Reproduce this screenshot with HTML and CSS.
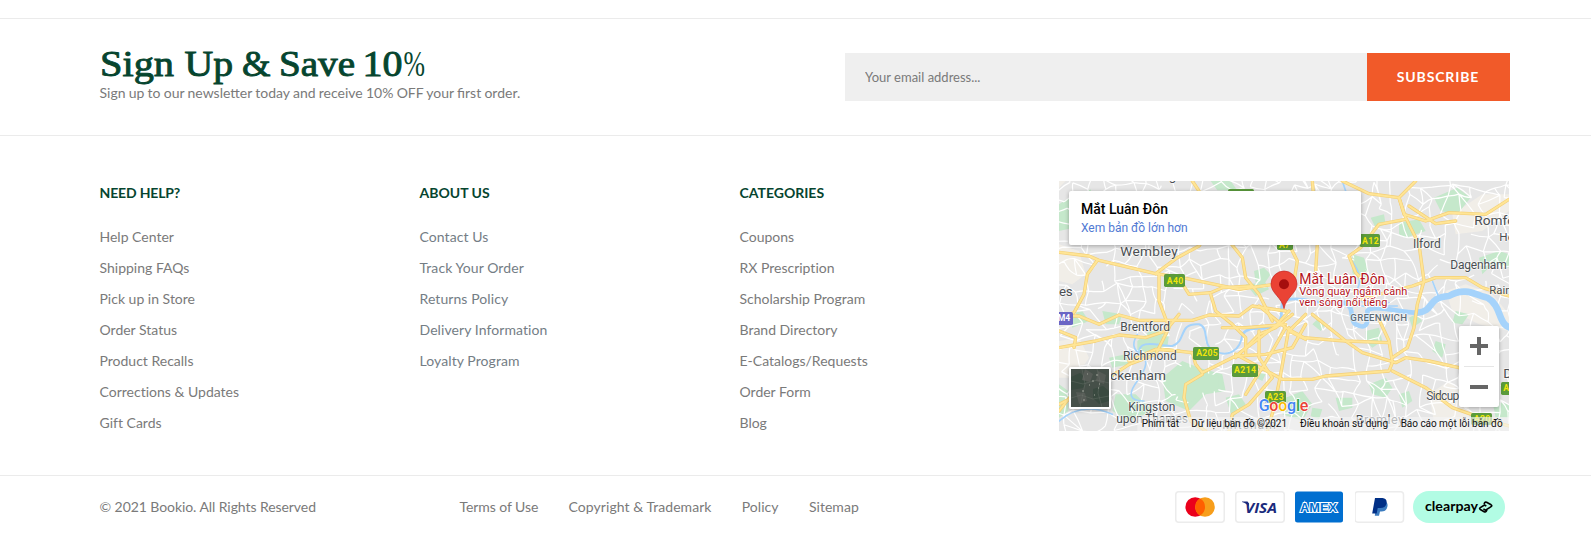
FILE: index.html
```html
<!DOCTYPE html>
<html lang="en">
<head>
<meta charset="utf-8">
<title>Bookio</title>
<link rel="stylesheet" href="styles.css">
</head>
<body>
<footer class="footer">
  <section class="newsletter">
    <div class="newsletter-copy">
      <h2 class="newsletter-title">
        <svg class="title-art" width="330" height="44" viewBox="0 0 330 44">
          <text x="0" y="31" textLength="74" lengthAdjust="spacingAndGlyphs">Sign</text>
          <text x="84.500" y="31" textLength="48.500" lengthAdjust="spacingAndGlyphs">Up</text>
          <text x="142" y="31" textLength="28.500" lengthAdjust="spacingAndGlyphs">&amp;</text>
          <text x="179" y="31" textLength="76" lengthAdjust="spacingAndGlyphs">Save</text>
          <text x="262.500" y="31" textLength="40" lengthAdjust="spacingAndGlyphs">10</text>
          <text class="title-thin" x="303.500" y="31" textLength="21.500" lengthAdjust="spacingAndGlyphs">%</text>
        </svg>
      </h2>
      <p class="newsletter-text">Sign up to our newsletter today and receive 10% OFF your first order.</p>
    </div>
    <form class="subscribe">
      <input class="subscribe-input" type="email" placeholder="Your email address...">
      <button class="subscribe-button" type="button">SUBSCRIBE</button>
    </form>
  </section>

  <section class="columns">
    <div class="column">
      <h3 class="column-title title-tight">NEED HELP?</h3>
      <ul class="links">
        <li>Help Center</li><li>Shipping FAQs</li><li>Pick up in Store</li><li>Order Status</li><li>Product Recalls</li><li>Corrections &amp; Updates</li><li>Gift Cards</li>
      </ul>
    </div>
    <div class="column">
      <h3 class="column-title">ABOUT US</h3>
      <ul class="links links-cool">
        <li>Contact Us</li><li>Track Your Order</li><li>Returns Policy</li><li>Delivery Information</li><li>Loyalty Program</li>
      </ul>
    </div>
    <div class="column">
      <h3 class="column-title">CATEGORIES</h3>
      <ul class="links">
        <li>Coupons</li><li>RX Prescription</li><li>Scholarship Program</li><li>Brand Directory</li><li>E-Catalogs/Requests</li><li>Order Form</li><li>Blog</li>
      </ul>
    </div>
    <div class="map">
      <svg class="map-canvas" viewBox="0 0 1350 750" width="450" height="250">
        <rect width="1350" height="750" fill="#e6e6e6"/>
        <g fill="#f1eee8">
          <path d="M0 190L60 210 80 280 40 310 0 300zM0 20L20 0H0zM1180 100l90-60 80 0v50l-80 60-80 10zM1160 330l60-20 80 30 50 60v50l-90-20-80-40zM0 480l60-10 30 60-40 60-50 0zM1110 640l60-40 60 60 0 90h-100z"/>
        </g>
        <g fill="#c5e8cb">
          <path d="M0 70l30-20 25 30-10 60-45 10zM60 45l35-20 10 40-30 15zM235 480l50-40 45 20-5 40-50 20-40-5zM310 590l60-50 50 20 70 20 10 50-60 10-50 50-70-30zM170 640l60 0 50 50-70 30-50-30zM585 270l30-10 20 20-20 30-25-5zM560 310l60-5 10 20-40 20zM880 220l35 10 20 60-25 25-30-40zM935 110l40-10 5 30-30 10zM1020 125l60-10 20 35-60 20-20-10zM1125 50l70-30 40 30-40 50-50-10zM1260 230l60-20 30 10v40l-50-10-30 30zM760 430l20-20 20 20-15 20zM920 450l40-10 10 40-30 20-20-20zM1050 410l20-10 20 20-30 20zM680 650l50-20 30 40-30 50-60-20zM930 610l50-20 20 30-20 30-40-10zM1020 640l30-10 10 30-30 20zM500 650l40-10 20 30-40 40zM30 400l40-10 20 30-50 20zM130 390l60 10-10 30-40 0zM150 530l50-10 10 30-50 10zM830 650l50 0 0 30-40 10zM1130 480l30 10-10 40-30-20zM0 610l28 20 0 60-28 20zM455 0l60 0 20 28-60 0zM1300 660l50 10v40l-40 0zM760 680l30 5-10 30-25-10zM1190 390l40 10-20 30-30-5zM600 570l20 10-10 20-20-10z"/>
        </g>
        <g id="streets" class="streets"></g>
        <g fill="#c5e8cb">
          <path d="M318 595l55-45 45 20 60 15 0 45-50 5-35 30-40-20zM240 485l45-35 30 15-5 30-35 15zM885 228l25 10 18 50-18 20-22-35z"/>
        </g>
        <g fill="none" stroke="#a5d3fb" stroke-linecap="round" stroke-linejoin="round">
          <path stroke-width="6" d="M240 520C235 470 300 495 340 495C385 480 355 425 420 430C455 440 425 500 470 510C505 530 545 510 550 460"/>
          <path stroke-width="8" d="M550 460C575 425 625 460 660 425C680 390 650 365 690 355C750 345 790 380 855 365"/>
          <path stroke-width="14" d="M855 365C890 375 870 420 890 430C925 450 930 420 925 390C940 365 1035 400 1085 395"/>
          <path stroke-width="20" d="M1075 395C1130 390 1100 350 1170 345C1220 315 1255 345 1285 350C1330 375 1315 430 1355 440"/>
          <path stroke-width="5" d="M870 360l120 5M885 375h130M235 460q-25 40 10 60t-10 80 20 60M875 235q40 50 20 90M0 720q70-60 160-20M850 0l10 30M1120 300l20 50"/>
        </g>
        <g class="roads" id="roads">
          <path d="M0 214L90 225L120 238L290 278L370 290L540 325L680 305"/>
          <path d="M115 238L85 280L75 340L45 395L0 410"/>
          <path d="M290 278L355 230L420 195L470 120"/>
          <path d="M300 278L300 360L330 440L290 520L210 550L150 590L40 640L0 690"/>
          <path d="M0 405L60 405L120 430L180 402L240 418L400 418L450 402L540 405L580 375L680 390"/>
          <path d="M0 500L110 480L180 462L260 470L320 450L360 400"/>
          <path d="M0 450L50 470L45 500"/>
          <path d="M365 300L390 340L455 335L490 320L580 315"/>
          <path d="M455 340L470 390L520 430L560 470L560 520"/>
          <path d="M510 180L550 230L560 290L600 340L640 420"/>
          <path d="M400 0L420 30M850 0L930 38L1020 50L1070 0"/>
          <path d="M690 190L715 240L705 300M775 190L770 270M760 0L765 60"/>
          <path d="M1020 50L1035 100L1100 120L1170 95L1280 100L1350 55"/>
          <path d="M905 200L960 130L1040 115M905 200L870 225L890 275L915 300"/>
          <path d="M1020 50L1040 110L1080 190L1095 300L1075 370L1065 440L1045 500L1000 530"/>
          <path d="M1050 75L1130 128L1190 120"/>
          <path d="M870 365L940 345L1060 315L1130 290L1220 290L1270 320L1350 345"/>
          <path d="M680 430L560 440L490 440"/>
          <path d="M310 505L400 515L410 550L430 575"/>
          <path d="M210 540L290 505L360 510M430 575L530 525L650 435L690 390"/>
          <path d="M600 375L680 440L735 470L830 478L860 480L990 485"/>
          <path d="M760 400L860 480L910 515L1010 545L1040 530L1110 540L1200 560L1210 565"/>
          <path d="M960 415L990 480L1000 545L990 570L800 585L760 595L670 595L530 520"/>
          <path d="M1000 570L1100 620L1180 680L1280 715L1350 735"/>
          <path d="M530 525L620 520L700 500L740 430M690 440L665 580L645 680L625 750"/>
          <path d="M600 450L600 530L640 590L570 670L520 700L510 750"/>
          <path d="M430 580L380 610L375 650L395 720L440 750"/>
          <path d="M680 440L640 510L610 560L560 640M700 400L650 440L600 460L530 530"/>
          <path d="M0 670L30 655M740 400L690 450L740 475"/>
        </g>
        <g class="badges">
          <g fill="#5b9b3c"><rect x="507" y="24" width="78" height="36" rx="5"/><rect x="315" y="279" width="63" height="39" rx="5"/><rect x="654" y="170" width="48" height="37" rx="5"/><rect x="902" y="159" width="61" height="39" rx="5"/><rect x="402" y="498" width="78" height="39" rx="5"/><rect x="519" y="549" width="78" height="39" rx="5"/><rect x="618" y="630" width="63" height="36" rx="5"/><rect x="1326" y="603" width="50" height="39" rx="5"/><rect x="1236" y="696" width="63" height="36" rx="5"/></g>
          <rect x="-20" y="393" width="62" height="39" rx="5" fill="#6a66c5"/>
          <g fill="#f0e60a"><text x="323" y="308" textLength="50">A40</text><text x="660" y="202">A7</text><text x="909" y="189" textLength="50">A12</text><text x="412" y="526" textLength="64">A205</text><text x="525" y="577" textLength="66">A214</text><text x="624" y="657" textLength="50">A23</text><text x="1333" y="631">A2</text><text x="1244" y="723" textLength="50">A20</text></g>
          <text x="-4" y="421" fill="#fff">M4</text>
        </g>
        <g class="places">
          <text x="329" y="-2">g</text>
          <text x="184" y="225" font-size="41" textLength="172">Wembley</text>
          <text x="0" y="345" font-size="40" textLength="41">es</text>
          <text x="184" y="450" font-size="36" textLength="149">Brentford</text>
          <text x="192" y="538" font-size="36" textLength="161">Richmond</text>
          <text x="153" y="597" font-size="41" textLength="168">ckenham</text>
          <text x="208" y="690" font-size="36" textLength="141">Kingston</text>
          <text x="172" y="726" font-size="36" textLength="215">upon Thames</text>
          <text x="490" y="745" font-size="36" textLength="160">Mitcham</text>
          <text x="890" y="729" font-size="38" textLength="145">Bromley</text>
          <text x="1062" y="201" font-size="36" textLength="83">Ilford</text>
          <text x="1246" y="132" font-size="41">Romford</text>
          <text x="1321" y="181" font-size="35">Hornchurch</text>
          <text x="1174" y="265" font-size="36" textLength="169">Dagenham</text>
          <text x="1291" y="339" font-size="34">Rainham</text>
          <text x="1333" y="592" font-size="41">Dartford</text>
          <text x="1102" y="657" font-size="36" textLength="99">Sidcup</text>
          <text x="874" y="420" font-size="29" font-weight="500" fill="#5d6b76" textLength="170">GREENWICH</text>
        </g>
        <g>
          <path d="M675 383C670 350 636 337 636 309A39 39 0 0 1 714 309C714 337 680 350 675 383Z" fill="#ea4335" stroke="#c5221f" stroke-width="2"/>
          <circle cx="675" cy="310" r="15" fill="#a50e0e"/>
        </g>
        <g class="pin-label">
          <text x="721" y="309" font-size="42" textLength="258">Mắt Luân Đôn</text>
          <text x="721" y="341" font-size="33" textLength="324">Vòng quay ngắm cảnh</text>
          <text x="721" y="374" font-size="33" textLength="264">ven sông nổi tiếng</text>
        </g>
        <g class="google"><text x="599" y="689" textLength="149"><tspan fill="#4285f4">G</tspan><tspan fill="#ea4335">o</tspan><tspan fill="#fbbc05">o</tspan><tspan fill="#4285f4">g</tspan><tspan fill="#34a853">l</tspan><tspan fill="#ea4335">e</tspan></text></g>
        <rect x="235" y="708" width="1115" height="42" fill="#f5f5f5" opacity=".65"/>
        <g class="legal">
          <text x="248" y="738" textLength="112">Phím tắt</text>
          <text x="397" y="738" textLength="287">Dữ liệu bản đồ ©2021</text>
          <text x="723" y="738" textLength="264">Điều khoản sử dụng</text>
          <text x="1025" y="738" textLength="306">Báo cáo một lỗi bản đồ</text>
        </g>
      </svg>
      <div class="map-card">
        <div class="map-card-title">Mắt Luân Đôn</div>
        <div class="map-card-link">Xem bản đồ lớn hơn</div>
      </div>
      <div class="satellite">
        <svg width="38" height="38" viewBox="0 0 38 38">
          <rect width="38" height="38" fill="#465049"/>
          <path d="M0 8l9-4 7 6-4 9-12 2zM22 20l10-3 6 5v10l-10 3-6-6z" fill="#3a4a40"/>
          <path d="M14 0l8 5-3 8-8-2zM27 2l8 4-2 9-8-3zM5 23l9 1 2 8-8 3z" fill="#565b56"/>
          <path d="M0 12l12 3 14-4 12 3M26 0l3 12-2 12 4 14M0 29l10-3 12 4 16-3M11 0l3 15-5 23" fill="none" stroke="#747a72" stroke-width=".7" opacity=".5"/>
          <path d="M16 5h1m4 7h2m4 7h1m-17 3h2m5-6h1m6-10h2m-4 20h1m-12 5h2m14-16h1" stroke="#a0a49a" stroke-width="1"/>
        </svg>
      </div>
      <div class="zoom">
        <svg class="zoom-icon" viewBox="0 0 18 18"><path d="M0 7h7V0h4v7h7v4h-7v7H7v-7H0z"/></svg>
        <span class="zoom-rule"></span>
        <svg class="zoom-icon" viewBox="0 0 18 18"><path d="M0 7h18v4H0z"/></svg>
      </div>
    </div>
  </section>

  <section class="bottom">
    <p class="copyright">© 2021 Bookio. All Rights Reserved</p>
    <nav class="legal-nav"><span class="nav-tight">Terms of Use</span><span>Copyright &amp; Trademark</span><span>Policy</span><span>Sitemap</span></nav>
    <div class="payments">
      <svg width="50" height="32" viewBox="0 0 50 32">
        <rect class="card" x=".75" y=".75" width="48.5" height="30.5" rx="3"/>
        <circle cx="20.2" cy="16" r="9.8" fill="#eb001b"/><circle cx="30" cy="16" r="9.8" fill="#f79e1b"/>
        <path d="M25.1 7.5a9.8 9.8 0 0 1 0 17a9.8 9.8 0 0 1 0-17z" fill="#ff5f00"/>
      </svg>
      <svg width="50" height="32" viewBox="0 0 50 32">
        <rect class="card" x=".75" y=".75" width="48.5" height="30.5" rx="3"/>
        <text class="visa" x="10" y="21.500" textLength="32" lengthAdjust="spacingAndGlyphs">VISA</text>
        <path d="M7 10.500h5.500l1.500 2-.5 3q-2-3.500-6.500-4.500z" fill="#1a2a7c"/>
      </svg>
      <svg width="50" height="32" viewBox="0 0 50 32">
        <rect x="0" y=".5" width="48" height="31" rx="2.500" fill="#016fd0"/>
        <text class="amex" x="5" y="20.500" textLength="37" lengthAdjust="spacingAndGlyphs">AMEX</text>
      </svg>
      <svg width="50" height="32" viewBox="0 0 50 32">
        <rect class="card" x="0" y=".75" width="48.500" height="30.500" rx="3"/>
        <path d="M21.500 10.500h8q4 1 2.800 5.500q-1 4.500-6 4.500h-1.300l-1 4.200h-4.200z" fill="#3b7bbf"/>
        <path d="M20 7h7.500q5 .5 4 5.500q-1 4.500-6.300 4.500h-2.500l-1 5.500h-4.500z" fill="#002f86"/>
      </svg>
      <svg class="clearpay" width="92" height="32" viewBox="0 0 92 32">
        <rect width="92" height="32" rx="16" fill="#b2fce4"/>
        <text class="clearpay-text" x="12" y="20" textLength="53" lengthAdjust="spacingAndGlyphs">clearpay</text>
        <path d="M71 13l.6-1.200q.8-1.200 2-.5l4.500 2.500q1.400.9 0 1.800l-5.500 3.600-2.200-1.300M74 18.800l-.8 1.500q-.8 1.100-2 .4l-3.900-2.200q-1.400-.9 0-1.800l4.200-2.700 1.800 1" fill="none" stroke="#000" stroke-width="1.600" stroke-linejoin="round"/>
      </svg>
    </div>
  </section>
</footer>
<script src="map.js"></script>
</body>
</html>
```
FILE: styles.css
```css
* { box-sizing: border-box; }
body { margin: 0; background: #fff; color: #7a7a7a; font-family: Lato, sans-serif; font-size: 14px; }
h2, h3, p, ul { margin: 0; padding: 0; }
.footer { height: 538px; padding-top: 18px; overflow: hidden; }
.newsletter { height: 117px; border-top: 1px solid #ebebeb; padding: 0 81px 0 99.5px; display: flex; justify-content: space-between; }
.newsletter-copy { padding-top: 26px; }
.newsletter-title { height: 38px; }
.title-art { display: block; fill: #06452f; stroke: #06452f; stroke-width: .9; font: 400 36px "Liberation Serif", serif; overflow: visible; }
.title-thin { stroke: none; }
.newsletter-text { line-height: 20px; white-space: nowrap; word-spacing: -.35px; }
.subscribe { display: flex; width: 665px; height: 48px; margin-top: 34px; }
.subscribe-input { flex: 1; border: 0; background: #efefef; padding: 0 20px; font: 13px Lato, sans-serif; border-radius: 0; }
.subscribe-input::placeholder { color: #7a7a7a; }
.subscribe-button { width: 143px; border: 0; background: #f15a29; color: #fff; font: 700 14px Lato, sans-serif; letter-spacing: .85px; padding: 0 1px 2px 0; }
.columns { height: 340px; border-top: 1px solid #ebebeb; padding: 45px 0 0 99.5px; display: grid; grid-template-columns: 320px 320px 319.5px 450px; align-items: start; }
.column-title { font-size: 14px; line-height: 24px; font-weight: 700; color: #06452f; }
.title-tight { letter-spacing: -.15px; }
.links { list-style: none; padding-top: 16px; font-variant-ligatures: none; }
.links li { height: 31px; line-height: 31px; }
.links-cool { color: #747d85; letter-spacing: .08px; }
.map { position: relative; width: 450px; height: 250px; overflow: hidden; font-family: Roboto, sans-serif; }
.map-canvas { display: block; }
.streets { fill: none; stroke: #fff; stroke-width: 3.6; stroke-linejoin: round; }
.roads { fill: none; stroke: #fbdb7c; stroke-width: 9; stroke-linejoin: round; stroke-linecap: round; }
.badges text { font-size: 26px; font-weight: 700; }
.places { fill: #4a4e52; stroke: #fff; stroke-width: 4; stroke-opacity: .7; paint-order: stroke; font-size: 40px; }
.pin-label { fill: #b3141c; stroke: #fff; stroke-width: 6; paint-order: stroke; }
.google { font-size: 48px; font-weight: 500; stroke: #fff; stroke-width: 4; paint-order: stroke; }
.legal { fill: #111; font-size: 30px; }
.map-card { position: absolute; left: 10px; top: 10px; width: 292px; height: 54px; padding: 9px 12px; background: #fff; border-radius: 2px; box-shadow: 0 1px 4px rgba(0,0,0,.3); }
.map-card-title { color: #000; font-size: 14px; font-weight: 500; line-height: 19px; }
.map-card-link { color: #5079d3; font-size: 12px; line-height: 19px; }
.satellite { position: absolute; left: 10px; top: 186px; width: 42px; height: 42px; border: 2px solid #fff; border-radius: 2px; box-shadow: 0 1px 4px rgba(0,0,0,.35); }
.satellite svg { display: block; }
.zoom { position: absolute; left: 400px; top: 145px; width: 40px; height: 81px; background: #fff; border-radius: 2px; box-shadow: 0 1px 4px rgba(0,0,0,.3); display: flex; flex-direction: column; align-items: center; justify-content: space-between; padding: 11px 0; }
.zoom-icon { width: 18px; height: 18px; fill: #666; }
.zoom-rule { width: 30px; height: 1px; background: #e6e6e6; }
.bottom { height: 63px; border-top: 1px solid #ebebeb; display: grid; grid-template-columns: 360px 715.5px auto; padding: 0 0 0 99.5px; }
.copyright, .legal-nav { line-height: 62px; white-space: nowrap; }
.copyright { letter-spacing: -.07px; }
.legal-nav { display: flex; gap: 30.3px; letter-spacing: .05px; }
.nav-tight { letter-spacing: -.07px; }
.payments { display: flex; gap: 10px; padding-top: 15px; }
.clearpay { margin-left: -2px; }
.card { fill: #fff; stroke: #ececec; stroke-width: 1.5; }
.visa { font: italic 700 14.5px "Open Sans", sans-serif; fill: #1a2a7c; }
.amex { font: 700 13px "Liberation Sans", sans-serif; fill: #016fd0; stroke: #fff; stroke-width: 2; paint-order: stroke; }
.clearpay-text { font: 700 14px Lato, sans-serif; fill: #000; }
```
FILE: map.js
```js
// Draws the minor street network and the casing under the main roads.
const NS = 'http://www.w3.org/2000/svg';
let seed = 17;
const rnd = () => (seed = (seed * 16807) % 2147483647) / 2147483647;
const step = 38, cols = 38, rows = 23, pts = [];
for (let r = 0; r < rows; r++) {
  pts.push([]);
  for (let c = 0; c < cols; c++) {
    pts[r].push([c * step - 20 + (rnd() - .5) * 34, r * step - 20 + (rnd() - .5) * 34]);
  }
}
let d = '';
const line = (a, b) => {
  const mx = (a[0] + b[0]) / 2 + (rnd() - .5) * 10, my = (a[1] + b[1]) / 2 + (rnd() - .5) * 10;
  d += `M${a[0].toFixed(1)} ${a[1].toFixed(1)}Q${mx.toFixed(1)} ${my.toFixed(1)} ${b[0].toFixed(1)} ${b[1].toFixed(1)}`;
};
for (let r = 0; r < rows - 1; r++) {
  for (let c = 0; c < cols - 1; c++) {
    if (rnd() < .7) line(pts[r][c], pts[r][c + 1]);
    if (rnd() < .7) line(pts[r][c], pts[r + 1][c]);
    if (rnd() < .12) line(pts[r][c], pts[r + 1][c + 1]);
  }
}
const streets = document.createElementNS(NS, 'path');
streets.setAttribute('d', d);
document.getElementById('streets').append(streets);

const roads = document.getElementById('roads');
const casing = roads.cloneNode(true);
casing.removeAttribute('id');
casing.style.stroke = '#f3cf78';
casing.style.strokeWidth = 10;
roads.style.stroke = '#ffe595';
roads.style.strokeWidth = 6;
roads.before(casing);
```
